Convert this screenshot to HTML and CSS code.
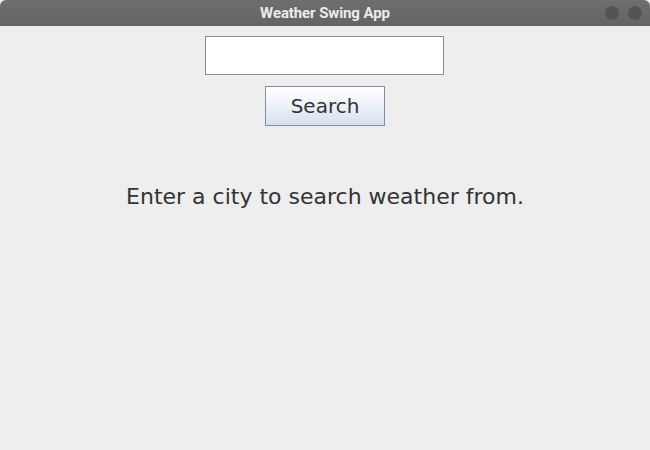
FILE: index.html
```html
<!DOCTYPE html>
<html>
<head>
<meta charset="utf-8">
<link rel="stylesheet" href="styles.css">
</head>
<body>
<div class="window">
  <div class="titlebar">
    <span class="title">Weather Swing App</span>
    <div class="controls">
      <span class="dot"></span>
      <span class="dot"></span>
    </div>
  </div>
  <div class="content">
    <input class="city" type="text">
    <button class="search">Search</button>
    <p class="message">Enter a city to search weather from.</p>
  </div>
</div>
</body>
</html>
```

FILE: styles.css
```css
html, body {
  margin: 0;
  padding: 0;
  background: #eeeeee;
}
.window {
  width: 650px;
  height: 450px;
  display: flex;
  flex-direction: column;
  background: #eeeeee;
}
.titlebar {
  height: 26px;
  background: linear-gradient(#6e6e6e, #646464);
  position: relative;
  display: flex;
  align-items: center;
  justify-content: center;
  border-radius: 6px 6px 0 0;
}
.title {
  font-family: Roboto, "Liberation Sans", sans-serif;
  font-weight: 700;
  font-size: 15px;
  color: #ececec;
  letter-spacing: -0.1px;
}
.controls {
  position: absolute;
  right: 8px;
  top: 6px;
  display: flex;
  gap: 9px;
}
.dot {
  width: 14px;
  height: 14px;
  border-radius: 50%;
  background: #545454;
}
.content {
  flex: 1;
  display: flex;
  flex-direction: column;
  align-items: center;
  padding-top: 10px;
}
.city {
  box-sizing: border-box;
  width: 239px;
  height: 39px;
  margin: 0 0 0 -1px;
  border: 1px solid #8c8c8c;
  background: #ffffff;
  padding: 0;
  outline: none;
}
.search {
  box-sizing: border-box;
  margin-top: 11px;
  width: 120px;
  height: 40px;
  border: 1px solid #7f8fa6;
  background: linear-gradient(#ffffff 0%, #f0f4f9 40%, #d6e1ee 100%);
  font-family: "DejaVu Sans", sans-serif;
  font-size: 20px;
  color: #333333;
  padding: 0 0 1px 0;
}
.message {
  margin: 58px 0 0 0;
  font-family: "DejaVu Sans", sans-serif;
  font-size: 22px;
  color: #333333;
}
```
